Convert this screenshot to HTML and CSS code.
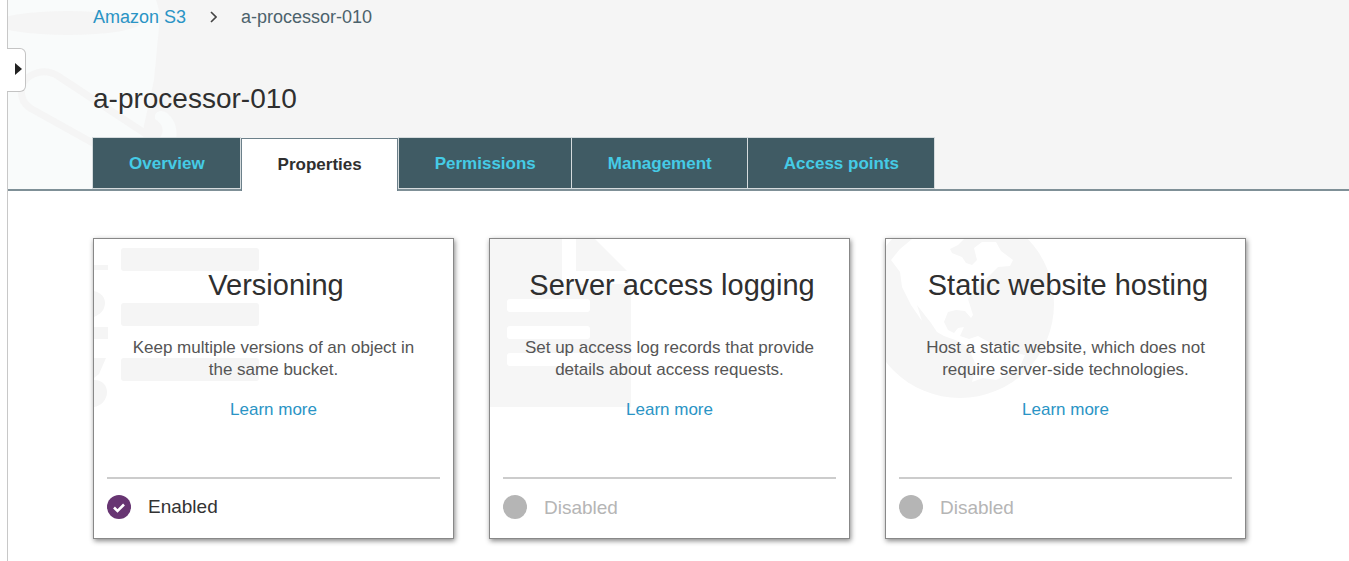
FILE: index.html
```
<!DOCTYPE html>
<html lang="en">
<head>
<meta charset="utf-8">
<title>a-processor-010</title>
<link rel="stylesheet" href="styles.css">
</head>
<body>
<main class="panel">
  <button class="drawer" type="button" aria-label="Open navigation">
    <svg width="7" height="12" viewBox="0 0 7 12"><path d="M0 0L7 6L0 12Z" fill="#222"/></svg>
  </button>
  <header class="top">
    <svg class="bucket" width="180" height="189" viewBox="8 0 180 189" aria-hidden="true">
      <path fill="#f9fbfb" d="M8 0H156C159 8 160 16 159 27L154 80L143 130L146 189H8Z"/>
      <ellipse cx="68" cy="23" rx="72" ry="12" fill="#f5f5f5"/>
      <path d="M100 147L30 108C18 100 19 82 30 76C40 70 50 71 58 76L146 134" fill="none" stroke="#f5f5f5" stroke-width="7"/>
      <path fill="#f9fbfb" d="M155 115C157 110 164 110 168 114C175 120 178 130 176 140H158C166 132 163 124 155 119Z"/>
    </svg>
    <nav class="crumbs" aria-label="Breadcrumb">
      <a href="#">Amazon S3</a>
      <svg width="7" height="12" viewBox="0 0 7 12" aria-hidden="true"><path d="M1 1L6 6L1 11" fill="none" stroke="#444" stroke-width="1.6"/></svg>
      <span>a-processor-010</span>
    </nav>
    <h1 class="title">a-processor-010</h1>
    <nav class="tabs" aria-label="Bucket sections">
      <a class="tab" href="#">Overview</a>
      <a class="tab current" href="#" aria-current="page">Properties</a>
      <a class="tab" href="#">Permissions</a>
      <a class="tab" href="#">Management</a>
      <a class="tab" href="#">Access points</a>
    </nav>
  </header>
  <section class="cards">
    <article class="card">
      <svg class="art" width="180" height="170" viewBox="0 0 180 170" aria-hidden="true" fill="#f5f5f5">
        <rect x="27" y="9" width="138" height="23" rx="3"/><rect x="27" y="64" width="138" height="23" rx="3"/><rect x="27" y="119" width="138" height="23" rx="3"/>
        <rect y="26" width="14" height="5"/><path d="M0 52C9 54 13 61 10 69C8 74 4 76 0 78Z"/><rect y="88" width="14" height="12"/>
        <path d="M0 119H12L5 135L0 139ZM0 141C9 141 13 147 13 153C13 161 7 167 0 168Z"/>
      </svg>
      <div class="body"><h2>Versioning</h2>
      <p>Keep multiple versions of an object in<br>the same bucket.</p>
      <a href="#">Learn more</a></div>
      <footer class="status on">
        <svg width="24" height="24" viewBox="0 0 24 24" aria-hidden="true"><circle cx="12" cy="12" r="12" fill="#673572"/><path d="M7 12.5L10.5 16L17 9.5" fill="none" stroke="#fff" stroke-width="2.6"/></svg>
        <span>Enabled</span>
      </footer>
    </article>
    <article class="card">
      <svg class="art" width="180" height="170" viewBox="0 0 180 170" aria-hidden="true">
        <path fill="#f6f6f6" d="M0 0H72V45H141V168H0ZM86 0H105L137 32H86Z"/>
        <g fill="#fff"><rect x="17" y="60" width="83" height="13" rx="3"/><rect x="17" y="87" width="83" height="13" rx="3"/><rect x="17" y="114" width="83" height="13" rx="3"/></g>
      </svg>
      <div class="body"><h2>Server access logging</h2>
      <p>Set up access log records that provide<br>details about access requests.</p>
      <a href="#">Learn more</a></div>
      <footer class="status">
        <svg width="24" height="24" viewBox="0 0 24 24" aria-hidden="true"><circle cx="12" cy="12" r="12" fill="#b5b5b5"/></svg>
        <span>Disabled</span>
      </footer>
    </article>
    <article class="card">
      <svg class="art" width="180" height="170" viewBox="0 0 180 170" aria-hidden="true">
        <circle cx="74" cy="65" r="94" fill="#f6f6f6"/>
        <path fill="#fff" d="M5 21L14 10L26 0H78L72 6L64 10L66 14L76 18L80 24L86 26L91 21L88 9L96 3H110L115 12L127 21L124 27L112 28L103 37L91 47L82 60L87 76L85 79L79 72L70 71L62 73L58 83L62 91L68 94L72 89L78 88L74 97L83 100L92 97L108 106L120 112L139 116L133 130L110 141L97 139L86 143L90 126L82 108L72 102L58 97L51 93L45 84L31 66L36 82L25 66L16 48L14 33Z"/>
      </svg>
      <div class="body"><h2>Static website hosting</h2>
      <p>Host a static website, which does not<br>require server-side technologies.</p>
      <a href="#">Learn more</a></div>
      <footer class="status">
        <svg width="24" height="24" viewBox="0 0 24 24" aria-hidden="true"><circle cx="12" cy="12" r="12" fill="#b5b5b5"/></svg>
        <span>Disabled</span>
      </footer>
    </article>
  </section>
</main>
</body>
</html>
```
FILE: styles.css
```
* { box-sizing: border-box; }
body { margin: 0; background: #fff; color: #2f2f2f; font-family: "Liberation Sans", Arial, sans-serif; font-size: 17px; }
a { color: #2a94c5; text-decoration: none; }
.panel { position: relative; margin-left: 7px; border-left: 1px solid #c8c8c8; min-height: 100vh; }
.drawer { position: absolute; left: -1px; top: 48px; z-index: 2; width: 19px; height: 44px; padding: 0 3px 2px 0; border: 1px solid #c4c4c4; border-left: 0; border-radius: 0 6px 6px 0; background: #fff; display: flex; align-items: center; justify-content: flex-end; }
.top { position: relative; background: #f5f5f5; padding: 6px 0 0 85px; border-bottom: 2px solid #7f9097; }
.bucket { position: absolute; left: 0; top: 0; }
.crumbs { position: relative; display: flex; align-items: center; gap: 24px; font-size: 18px; line-height: 22px; color: #4c626c; }
.title { position: relative; margin: 54px 0 0; font-size: 28px; line-height: 34px; font-weight: 400; }
.tabs { position: relative; display: flex; gap: 1px; margin-top: 22px; margin-bottom: -2px; align-items: flex-start; }
.tab { padding: 0 35px 0 36px; height: 50px; line-height: 52px; font-weight: 700; background: #405b64; color: #45cbe6; outline: 1px solid #d5dbdd; }
.tab.current { height: 53px; background: #fff; color: #2f2f2f; border: 1px solid #6c808a; border-bottom: 0; outline: 0; }
.cards { display: grid; grid-template-columns: repeat(auto-fill, 361px); gap: 35px; padding: 47px 0 22px 85px; }
.card { position: relative; min-height: 301px; border: 1px solid #888; box-shadow: 1px 2px 5px #888; background: #fff; display: flex; flex-direction: column; padding: 0 13px; }
.art { position: absolute; left: 0; top: 0; }
.body { position: relative; flex: 1; text-align: center; padding-top: 28px; }
.body h2 { margin: 0; padding-left: 5px; font-size: 29px; line-height: 36px; font-weight: 400; }
.body p { margin: 34px 0 18px; line-height: 22px; color: #555; }
.body a { line-height: 22px; }
.status { position: relative; display: flex; align-items: center; gap: 17px; height: 61px; padding-bottom: 3px; border-top: 2px solid #ccc; font-size: 19px; color: #b5b5b5; }
.status span { padding-top: 2px; }
.status.on { color: #333; }
.status.on span { padding-top: 0; }
```
